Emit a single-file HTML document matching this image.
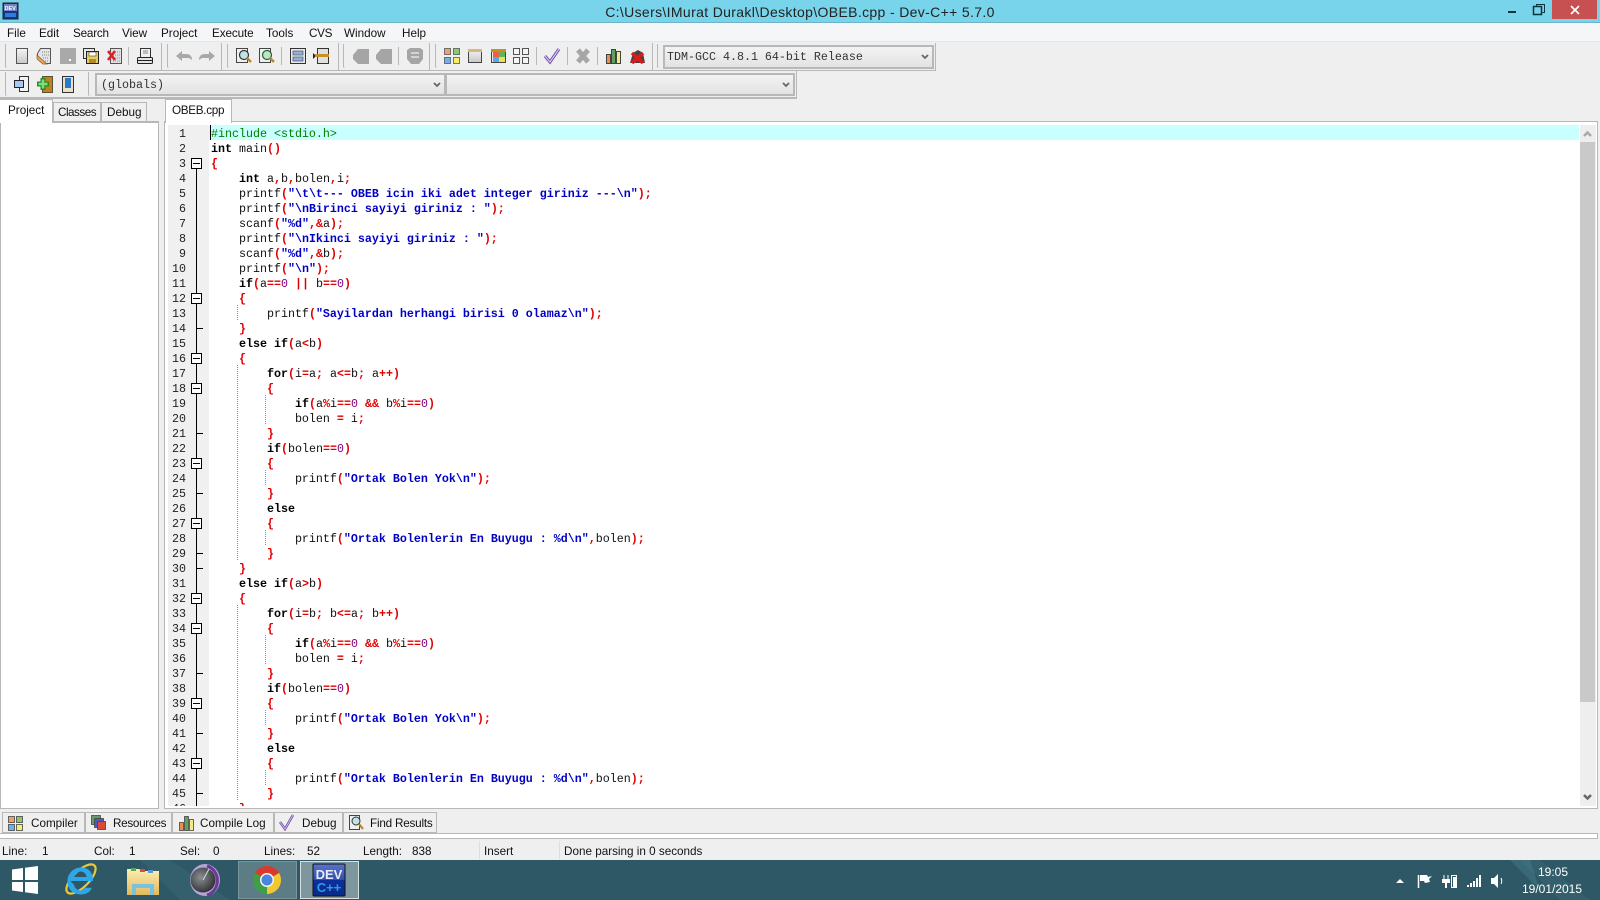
<!DOCTYPE html>
<html><head><meta charset="utf-8"><title>Dev-C++</title>
<style>
html,body{margin:0;padding:0;width:1600px;height:900px;overflow:hidden;background:#efefef}
body{position:relative;font:11.7px "Liberation Sans",sans-serif;color:#111}
.a{position:absolute;white-space:nowrap}
.box{position:absolute;box-sizing:border-box}
pre,pre.a{margin:0;font:11.67px/15px "Liberation Mono",monospace;white-space:pre}
#code b{font-weight:bold}
#code .k{color:#000}
#code .s{color:#0000c4}
#code .y{color:#e00000}
#code .n{color:#800080;font-weight:normal}
#code .p{color:#008000;font-weight:normal}
.sel{position:absolute;box-sizing:border-box;border:2px solid #b8b8b8;background:linear-gradient(#f3f3f3,#e3e3e3);font:11.67px/20px "Liberation Mono",monospace;color:#333;padding-left:2px}
.tab{position:absolute;box-sizing:border-box;border:1px solid #b8b8b8;background:#efefef;line-height:20px;white-space:nowrap;overflow:hidden}
</style></head><body>

<div class="box" style="left:0;top:0;width:1600px;height:23px;background:#78d4ea;border-bottom:1px solid #6fb3c6"></div>
<div class="a" style="left:605px;top:4px;width:390px;text-align:center;font-size:14px;letter-spacing:.35px;color:#222">C:\Users\IMurat Durakl\Desktop\OBEB.cpp - Dev-C++ 5.7.0</div>
<div class="box" style="left:1552px;top:0;width:45px;height:19px;background:#c75050"></div>
<div class="box" style="left:0;top:23px;width:1600px;height:19px;background:#f5f6f7;border-bottom:1px solid #e6e6e6"></div>

<div class="a" style="left:7px;top:27px">File</div>
<div class="a" style="left:39px;top:27px">Edit</div>
<div class="a" style="left:73px;top:27px;letter-spacing:-.2px">Search</div>
<div class="a" style="left:122px;top:27px">View</div>
<div class="a" style="left:161px;top:27px">Project</div>
<div class="a" style="left:212px;top:27px;letter-spacing:-.1px">Execute</div>
<div class="a" style="left:266px;top:27px">Tools</div>
<div class="a" style="left:309px;top:27px;letter-spacing:-.3px">CVS</div>
<div class="a" style="left:344px;top:27px">Window</div>
<div class="a" style="left:402px;top:27px">Help</div>

<!-- toolbar borders -->
<div class="box" style="left:0;top:70px;width:936px;height:1px;background:#b8b8b8"></div>
<div class="box" style="left:935px;top:43px;width:1px;height:28px;background:#b8b8b8"></div>
<div class="box" style="left:0;top:97px;width:797px;height:2px;background:#b8b8b8"></div>
<div class="box" style="left:796px;top:71px;width:1px;height:27px;background:#b8b8b8"></div>

<div class="sel" style="left:663px;top:45px;width:271px;height:24px">TDM-GCC 4.8.1 64-bit Release</div>
<div class="sel" style="left:95px;top:73px;width:351px;height:23px;padding-left:4px;line-height:20px">(globals)</div>
<div class="sel" style="left:445px;top:73px;width:350px;height:23px"></div>

<!-- left tabs -->
<div class="box" style="left:0;top:121px;width:159px;height:688px;background:#fff;border:1px solid #b8b8b8;border-top:0"></div>
<div class="box" style="left:53px;top:121px;width:106px;height:2px;background:#b8b8b8"></div>
<div class="tab" style="left:53px;top:102px;width:48px;height:20px;padding-left:4px;letter-spacing:-.5px">Classes</div>
<div class="tab" style="left:101px;top:102px;width:46px;height:20px;padding-left:5px">Debug</div>
<div class="tab" style="left:0;top:99px;width:53px;height:24px;background:#fff;border-bottom:0;border-left:0;padding-left:8px;line-height:22px">Project</div>

<!-- editor frame -->
<div class="box" style="left:164px;top:121px;width:1434px;height:688px;background:#fff;border:1px solid #b8b8b8"></div>
<div class="tab" style="left:165px;top:99px;width:67px;height:24px;background:#fff;border-bottom:0;padding-left:6px;line-height:22px;letter-spacing:-.3px">OBEB.cpp</div>
<div class="box" style="left:168px;top:125px;width:41px;height:681px;background:#f0f0f0"></div>
<div class="box" style="left:209px;top:125px;width:1370px;height:15px;background:#c8ffff"></div>
<div class="box" style="left:210px;top:125px;width:1px;height:15px;background:#000"></div>
<div class="box" style="left:1580px;top:125px;width:16px;height:681px;background:#eeeeee"></div>
<div class="box" style="left:1580px;top:142px;width:15px;height:560px;background:#c9c9c9"></div>

<pre class="a" style="left:165px;top:127px;width:21px;height:679px;overflow:hidden;text-align:right;color:#222">1
2
3
4
5
6
7
8
9
10
11
12
13
14
15
16
17
18
19
20
21
22
23
24
25
26
27
28
29
30
31
32
33
34
35
36
37
38
39
40
41
42
43
44
45
46</pre>

<pre id="code" class="a" style="left:211px;top:127px;width:1360px;height:679px;overflow:hidden;color:#111"><b class="p">#include &lt;stdio.h&gt;</b>
<b class="k">int</b> main<b class="y">()</b>
<b class="y">{</b>
    <b class="k">int</b> a<b class="y">,</b>b<b class="y">,</b>bolen<b class="y">,</b>i<b class="y">;</b>
    printf<b class="y">(</b><b class="s">"\t\t--- OBEB icin iki adet integer giriniz ---\n"</b><b class="y">);</b>
    printf<b class="y">(</b><b class="s">"\nBirinci sayiyi giriniz : "</b><b class="y">);</b>
    scanf<b class="y">(</b><b class="s">"%d"</b><b class="y">,&amp;</b>a<b class="y">);</b>
    printf<b class="y">(</b><b class="s">"\nIkinci sayiyi giriniz : "</b><b class="y">);</b>
    scanf<b class="y">(</b><b class="s">"%d"</b><b class="y">,&amp;</b>b<b class="y">);</b>
    printf<b class="y">(</b><b class="s">"\n"</b><b class="y">);</b>
    <b class="k">if</b><b class="y">(</b>a<b class="y">==</b><b class="n">0</b> <b class="y">||</b> b<b class="y">==</b><b class="n">0</b><b class="y">)</b>
    <b class="y">{</b>
        printf<b class="y">(</b><b class="s">"Sayilardan herhangi birisi 0 olamaz\n"</b><b class="y">);</b>
    <b class="y">}</b>
    <b class="k">else if</b><b class="y">(</b>a<b class="y">&lt;</b>b<b class="y">)</b>
    <b class="y">{</b>
        <b class="k">for</b><b class="y">(</b>i<b class="y">=</b>a<b class="y">;</b> a<b class="y">&lt;=</b>b<b class="y">;</b> a<b class="y">++)</b>
        <b class="y">{</b>
            <b class="k">if</b><b class="y">(</b>a<b class="y">%</b>i<b class="y">==</b><b class="n">0</b> <b class="y">&amp;&amp;</b> b<b class="y">%</b>i<b class="y">==</b><b class="n">0</b><b class="y">)</b>
            bolen <b class="y">=</b> i<b class="y">;</b>
        <b class="y">}</b>
        <b class="k">if</b><b class="y">(</b>bolen<b class="y">==</b><b class="n">0</b><b class="y">)</b>
        <b class="y">{</b>
            printf<b class="y">(</b><b class="s">"Ortak Bolen Yok\n"</b><b class="y">);</b>
        <b class="y">}</b>
        <b class="k">else</b>
        <b class="y">{</b>
            printf<b class="y">(</b><b class="s">"Ortak Bolenlerin En Buyugu : %d\n"</b><b class="y">,</b>bolen<b class="y">);</b>
        <b class="y">}</b>
    <b class="y">}</b>
    <b class="k">else if</b><b class="y">(</b>a<b class="y">&gt;</b>b<b class="y">)</b>
    <b class="y">{</b>
        <b class="k">for</b><b class="y">(</b>i<b class="y">=</b>b<b class="y">;</b> b<b class="y">&lt;=</b>a<b class="y">;</b> b<b class="y">++)</b>
        <b class="y">{</b>
            <b class="k">if</b><b class="y">(</b>a<b class="y">%</b>i<b class="y">==</b><b class="n">0</b> <b class="y">&amp;&amp;</b> b<b class="y">%</b>i<b class="y">==</b><b class="n">0</b><b class="y">)</b>
            bolen <b class="y">=</b> i<b class="y">;</b>
        <b class="y">}</b>
        <b class="k">if</b><b class="y">(</b>bolen<b class="y">==</b><b class="n">0</b><b class="y">)</b>
        <b class="y">{</b>
            printf<b class="y">(</b><b class="s">"Ortak Bolen Yok\n"</b><b class="y">);</b>
        <b class="y">}</b>
        <b class="k">else</b>
        <b class="y">{</b>
            printf<b class="y">(</b><b class="s">"Ortak Bolenlerin En Buyugu : %d\n"</b><b class="y">,</b>bolen<b class="y">);</b>
        <b class="y">}</b>
    <b class="y">}</b></pre>

<!-- bottom tabs -->
<div class="tab" style="left:2px;top:812px;width:83px;height:21px;padding-left:28px;line-height:21px">Compiler</div>
<div class="tab" style="left:85px;top:812px;width:87px;height:21px;padding-left:27px;line-height:21px;letter-spacing:-.3px">Resources</div>
<div class="tab" style="left:172px;top:812px;width:102px;height:21px;padding-left:27px;line-height:21px">Compile Log</div>
<div class="tab" style="left:274px;top:812px;width:69px;height:21px;padding-left:27px;line-height:21px">Debug</div>
<div class="tab" style="left:343px;top:812px;width:94px;height:21px;padding-left:26px;line-height:21px;letter-spacing:-.2px">Find Results</div>
<div class="box" style="left:0;top:833px;width:1598px;height:6px;background:#fff;border:1px solid #b8b8b8;border-left:0"></div>

<!-- status bar -->
<div class="a" style="left:2px;top:845px">Line:</div><div class="a" style="left:42px;top:845px">1</div>
<div class="a" style="left:94px;top:845px">Col:</div><div class="a" style="left:129px;top:845px">1</div>
<div class="a" style="left:180px;top:845px">Sel:</div><div class="a" style="left:213px;top:845px">0</div>
<div class="a" style="left:264px;top:845px">Lines:</div><div class="a" style="left:307px;top:845px">52</div>
<div class="a" style="left:363px;top:845px">Length:</div><div class="a" style="left:412px;top:845px">838</div>
<div class="a" style="left:484px;top:845px">Insert</div>
<div class="a" style="left:564px;top:845px">Done parsing in 0 seconds</div>
<div class="box" style="left:479px;top:841px;width:1px;height:18px;background:#ddd"></div>
<div class="box" style="left:559px;top:841px;width:1px;height:18px;background:#ddd"></div>

<!-- taskbar -->
<div class="box" style="left:0;top:860px;width:1600px;height:40px;background:#2e5865"></div>

<svg class="a" style="left:0;top:0" width="1600" height="900" viewBox="0 0 1600 900">
<defs>
<linearGradient id="g1" x1="0" x2="0" y1="0" y2="1"><stop offset="0" stop-color="#f4f4f4"/><stop offset="1" stop-color="#c8c8c8"/></linearGradient>
<radialGradient id="dial" cx=".4" cy=".4" r=".7"><stop offset="0" stop-color="#8b8f92"/><stop offset="1" stop-color="#26282c"/></radialGradient>
<linearGradient id="dev" x1="0" x2="0" y1="0" y2="1"><stop offset="0" stop-color="#5a73c8"/><stop offset=".5" stop-color="#2f4fb0"/><stop offset=".5" stop-color="#0c2f9e"/><stop offset="1" stop-color="#0a2a8a"/></linearGradient>
<linearGradient id="folder" x1="0" x2="0" y1="0" y2="1"><stop offset="0" stop-color="#fdeeb0"/><stop offset="1" stop-color="#e2b95c"/></linearGradient>
</defs>

<!-- title icon -->
<rect x="3" y="3" width="15" height="16" fill="#16358c" stroke="#222"/>
<rect x="4" y="4" width="13" height="7" fill="#6f83c6"/>
<text x="4.5" y="10" font-family="Liberation Sans" font-weight="bold" font-size="5.5" fill="#fff">DEV</text>
<rect x="5" y="13" width="11" height="4" fill="#2d7ddc"/>

<!-- window controls -->
<rect x="1508" y="11" width="8" height="2" fill="#0b3442"/>
<g fill="none" stroke="#0b3442" stroke-width="1"><path d="M1536.5 6.5v-2h8v8h-2"/><rect x="1533.5" y="6.5" width="8" height="8" stroke-width="1.5"/></g>
<path d="M1571 6l8 8m0-8l-8 8" stroke="#fff" stroke-width="1.6"/>

<!-- toolbar handles -->
<g stroke="#b8b8b8" fill="none">
<path d="M5.5 44v23h1M167.5 44v23h1M227.5 44v23h1M343.5 44v23h1M435.5 44v23h1M657.5 44v23h1"/>
<path d="M5.5 72v23h1M88.5 72v23h1"/>
<path d="M128.5 47v18M161.5 43v27M221.5 43v27M281.5 47v18M338.5 43v27M398.5 47v18M429.5 43v27M536.5 47v18M567.5 47v18M597.5 47v18M652.5 43v27"/>
</g>

<!-- new -->
<rect x="16.5" y="48.5" width="11" height="15" fill="url(#g1)" stroke="#555"/>
<!-- open -->
<path d="M40.5 48.5h10v15h-5l-8-7v-3z" fill="#e4e4e4" stroke="#555"/>
<path d="M42 52h7M42 55h7M43 58h6M45 61h4" stroke="#888" stroke-dasharray="1 1"/>
<path d="M37 55l10 9h-4l-6-5z" fill="#eaa45c" stroke="#8a5a20" stroke-width=".7"/>
<!-- save gray -->
<rect x="60" y="48" width="16" height="16" fill="#a9a9a9"/><rect x="69" y="59" width="2" height="2" fill="#fff"/>
<!-- save all -->
<rect x="83.5" y="48.5" width="11" height="10" fill="#e8e8e8" stroke="#333"/>
<rect x="86.5" y="51.5" width="12" height="12" fill="#e9cd63" stroke="#222"/>
<rect x="89" y="52" width="7" height="4" fill="#fff" stroke="#444" stroke-width=".6"/><rect x="89" y="59" width="7" height="4" fill="#b48a2a"/>
<!-- close -->
<rect x="110.5" y="48.5" width="11" height="15" fill="#e0e0e0" stroke="#555"/>
<path d="M113 52h7M113 55h7M113 58h7M113 61h7" stroke="#999" stroke-dasharray="1 1"/>
<path d="M108 51l7 9m0-9l-7 9" stroke="#d8232a" stroke-width="2.6"/>
<!-- print -->
<rect x="140.5" y="48.5" width="10" height="9" fill="#efefef" stroke="#333"/>
<path d="M143 51h5M143 53h5" stroke="#888"/>
<rect x="137.5" y="57.5" width="15" height="6" rx="1" fill="#e4e4e4" stroke="#222"/><path d="M138 60.5h14" stroke="#222"/>
<!-- undo redo -->
<path d="M176 56l6-5v3h4c4 0 6 2 6 6l-3-2h-7v3z" fill="#a8a8a8"/>
<path d="M215 56l-6-5v3h-4c-4 0-6 2-6 6l3-2h7v3z" fill="#a8a8a8"/>
<!-- find -->
<g>
<rect x="236.5" y="48.5" width="11" height="14" fill="#f0f0f0" stroke="#444"/>
<circle cx="244" cy="55" r="4.5" fill="#bfe3e8" stroke="#333" stroke-width="1.2"/><path d="M247 58l4 4" stroke="#b8862a" stroke-width="2.4"/>
<rect x="259.5" y="48.5" width="11" height="14" fill="#f0f0f0" stroke="#444"/>
<circle cx="267" cy="55" r="4.5" fill="#b9e8c4" stroke="#2b5a3a" stroke-width="1.2"/><path d="M270 58l4 4" stroke="#b8862a" stroke-width="2.4"/>
</g>
<!-- goto / indent -->
<rect x="290.5" y="48.5" width="15" height="15" fill="#e8e8e8" stroke="#333"/>
<rect x="293" y="51" width="10" height="4" fill="#8fb0d8" stroke="#445"  stroke-width=".6"/><rect x="293" y="57" width="10" height="4" fill="#8fb0d8" stroke="#445" stroke-width=".6"/>
<path d="M313 53l3 3-3 3z" fill="#222"/>
<rect x="317.5" y="48.5" width="11" height="15" fill="#e0e0e0" stroke="#333"/><rect x="315" y="54" width="14" height="3" fill="#c88f28"/>
<!-- gray bookmarks -->
<path d="M353 55l5-6h11v15h-11l-5-5z" fill="#a5a5a5"/>
<path d="M376 55l5-6h11v15h-11l-5-5z" fill="#a5a5a5"/>
<path d="M407 50l3-2h10l3 2v9l-4 5h-8l-4-5z" fill="#a5a5a5"/><path d="M411 53h8M411 57h8" stroke="#efefef" stroke-width="1.2"/>
<!-- tile icons -->
<g stroke="#555" stroke-width=".8">
<rect x="444.5" y="48.5" width="6" height="6" fill="#f0a070"/><rect x="453.5" y="48.5" width="6" height="6" fill="#8cc870"/>
<rect x="444.5" y="57.5" width="6" height="6" fill="#70aef0"/><rect x="453.5" y="57.5" width="6" height="6" fill="#f5ee70"/>
</g>
<rect x="468.5" y="49.5" width="13" height="13" fill="url(#g1)" stroke="#444"/><rect x="468" y="49" width="14" height="3" fill="#d9b67a"/>
<rect x="491.5" y="49.5" width="14" height="13" fill="#eee" stroke="#444"/><rect x="491" y="49" width="15" height="3" fill="#c88f28"/>
<rect x="493" y="52" width="6" height="5" fill="#e8643c"/><rect x="499" y="52" width="6" height="5" fill="#58b858"/><rect x="493" y="57" width="6" height="5" fill="#5aa6e8"/><rect x="499" y="57" width="6" height="5" fill="#f0e050"/>
<g fill="#f4f4f4" stroke="#444" stroke-width=".9">
<rect x="513.5" y="48.5" width="6" height="6"/><rect x="522.5" y="48.5" width="6" height="6"/><rect x="513.5" y="57.5" width="6" height="6"/><rect x="522.5" y="57.5" width="6" height="6"/>
</g>
<path d="M545 56l5 6 9-13" fill="none" stroke="#6a4aa8" stroke-width="3"/><path d="M545 56l5 6 9-13" fill="none" stroke="#d8c8f0" stroke-width="1.2"/>
<path d="M578 50l10 12m0-12l-10 12" stroke="#a6a6a6" stroke-width="5"/>
<g stroke="#333" stroke-width=".9">
<rect x="606.5" y="54.5" width="4" height="9" fill="#e8904c"/><rect x="611.5" y="49.5" width="4" height="14" fill="#60a060"/><rect x="616.5" y="51.5" width="4" height="12" fill="#f0ec88"/>
</g>
<path d="M630 63l3-10 5-3 5 3 2 10z" fill="#444"/>
<path d="M632 53l11 10m0-10l-11 10" stroke="#e01818" stroke-width="3.500"/>

<!-- toolbar2 icons -->
<rect x="19.5" y="76.5" width="9" height="15" fill="#f2f2f2" stroke="#333"/>
<rect x="14.5" y="80.5" width="9" height="7" fill="#a8c8f0" stroke="#223"/>
<rect x="42.5" y="76.5" width="10" height="16" fill="#c67f1e" stroke="#553"/>
<path d="M37 84h12M43 78v12" stroke="#2a8a2a" stroke-width="5"/><path d="M38.5 84h9M43 79.500v9" stroke="#7ae07a" stroke-width="2.500"/>
<rect x="62.5" y="76.500" width="11" height="16" fill="#e8e0c8" stroke="#333"/><rect x="65" y="78" width="6" height="10" fill="#2a78c8"/>

<!-- chevrons -->
<g fill="none" stroke="#666" stroke-width="1.800">
<path d="M922 55l3 3 3-3M434 83l3 3 3-3M783 83l3 3 3-3"/>
<path d="M1584 795l3.500 3.500 3.500-3.500" stroke-width="2.500"/>
<path d="M1584 136l3.500-3.500 3.500 3.500" stroke="#aaa" stroke-width="2.500"/>
</g>

<!-- fold gutter -->
<path d="M196.500 169V806" stroke="#000"/>
<path d="M197 328.500h6M197 433.500h6M197 493.500h6M197 553.500h6M197 568.500h6M197 673.500h6M197 733.500h6M197 793.500h6" stroke="#000"/>
<g fill="#fff" stroke="#000">
<rect x="191.500" y="158.500" width="10" height="10"/><rect x="191.500" y="293.500" width="10" height="10"/><rect x="191.500" y="353.500" width="10" height="10"/><rect x="191.500" y="383.500" width="10" height="10"/><rect x="191.500" y="458.500" width="10" height="10"/><rect x="191.500" y="518.500" width="10" height="10"/><rect x="191.500" y="593.500" width="10" height="10"/><rect x="191.500" y="623.500" width="10" height="10"/><rect x="191.500" y="698.500" width="10" height="10"/><rect x="191.500" y="758.500" width="10" height="10"/>
</g>
<path d="M193 163.500h7M193 298.500h7M193 358.500h7M193 388.500h7M193 463.500h7M193 523.500h7M193 598.500h7M193 628.500h7M193 703.500h7M193 763.500h7" stroke="#000"/>
<!-- indent guides -->
<path d="M237.500 305v15M237.500 365v195M237.500 605v195M265.500 395v30M265.500 470v15M265.500 530v15M265.500 635v30M265.500 710v15M265.500 770v15" stroke="#888" stroke-dasharray="1 1"/>

<!-- bottom tab icons -->
<g stroke="#444" stroke-width=".8">
<rect x="8.500" y="816.500" width="6" height="6" fill="#f0a070"/><rect x="16.500" y="816.500" width="6" height="6" fill="#8cc870"/>
<rect x="8.500" y="824.500" width="6" height="6" fill="#70aef0"/><rect x="16.500" y="824.500" width="6" height="6" fill="#f5ee70"/>
<rect x="91.500" y="815.500" width="9" height="9" fill="#6a9a6a"/><rect x="94.500" y="818.500" width="9" height="9" fill="#4a5ac8"/><rect x="97.500" y="821.500" width="8" height="8" fill="#d84a3a"/>
<rect x="179.500" y="822.500" width="4" height="8" fill="#e8904c"/><rect x="184.500" y="816.500" width="4" height="14" fill="#60a060"/><rect x="189.500" y="819.500" width="4" height="11" fill="#f0ec88"/>
</g>
<path d="M280 822l5 7 8-14" fill="none" stroke="#6a4aa8" stroke-width="2.400"/><path d="M280 822l5 7 8-14" fill="none" stroke="#d8c8f0" stroke-width=".8"/>
<rect x="349.500" y="815.500" width="10" height="14" fill="#f0f0f0" stroke="#444"/>
<circle cx="356" cy="821" r="4" fill="#bfe3e8" stroke="#333"/><path d="M359 824l4 5" stroke="#b8862a" stroke-width="2.200"/>

<!-- taskbar decor -->
<path d="M140 860l40 40h50l-60-40zM1520 860l40 40h30l-50-40z" fill="#3d6f7c" opacity=".35"/>
<path d="M1510 860l30 30-10-30z" fill="#4a8593" opacity=".4"/>
<!-- win logo -->
<path d="M12 869.500l11-1.500v12h-11zM25 867.700l13-1.700v14h-13zM12 882h11v10l-11-1.500zM25 882h13v12l-13-1.700z" fill="#fff"/>
<!-- IE -->
<ellipse cx="81" cy="879" rx="19" ry="8" transform="rotate(-45 81 879)" fill="none" stroke="#eac83a" stroke-width="2.200"/>
<g transform="translate(81 881) scale(1.350) translate(-81 -881)">
<path d="M73 881h17c0-7-4-10-9-10-6 0-10 5-10 10 0 6 4 10 10 10 4 0 7-2 8-5h-5c-1 1-2 2-3 2-3 0-5-2-5-4zM76 878c0-2 3-4 5-4s4 2 4 4z" fill="#2ea6e8" fill-rule="evenodd"/>
</g>
<!-- explorer -->
<path d="M127 869h12l3 2h17v24h-32z" fill="url(#folder)"/>
<rect x="131" y="868" width="5" height="3" fill="#58a858"/><rect x="140" y="869" width="5" height="3" fill="#d05040"/><rect x="148" y="870" width="5" height="3" fill="#5a9ad8"/>
<path d="M132 895v-11h22v11h-4v-7h-14v7z" fill="#7ac0e0"/>
<!-- dial -->
<ellipse cx="205" cy="880" rx="15" ry="16" fill="#b6a4d8"/>
<path d="M207 866a14 15 0 0 1 0 29" fill="none" stroke="#6a3a98" stroke-width="3"/>
<circle cx="203" cy="880" r="12.500" fill="url(#dial)"/>
<path d="M203 880l6-11" stroke="#ddd"/>
<!-- chrome btn -->
<rect x="238.500" y="861.500" width="58" height="37" fill="#5d7d86" stroke="#7a949b"/>
<path d="M267 880L254.900 873A14 14 0 0 1 279.100 873z" fill="#d93a2e"/>
<path d="M267 880L279.100 873A14 14 0 0 1 267 894z" fill="#f2c82e"/>
<path d="M267 880L267 894A14 14 0 0 1 254.900 873z" fill="#3f9e48"/>
<circle cx="267" cy="880" r="7" fill="#f4f4f4"/><circle cx="267" cy="880" r="5.500" fill="#4a86dc"/>
<!-- dev btn -->
<rect x="300.500" y="861.500" width="58" height="37" fill="#7e969d" stroke="#d6e0e2"/>
<rect x="313" y="864" width="32" height="32" rx="1" fill="url(#dev)" stroke="#111"/>
<text x="329" y="879" text-anchor="middle" font-family="Liberation Sans" font-weight="bold" font-size="13" fill="#e8ecf6">DEV</text>
<text x="329" y="892" text-anchor="middle" font-family="Liberation Sans" font-weight="bold" font-size="13" fill="#2f9be8">C++</text>

<!-- tray -->
<path d="M1396 883l4-4 4 4z" fill="#fff"/>
<path d="M1418.500 875v13" stroke="#fff" stroke-width="1.500"/><path d="M1420 875h7l1 2 4-1-3 3 1 3-5 1-1-2h-4z" fill="#fff"/>
<path d="M1444 875v4M1448 875v4" stroke="#fff"/><rect x="1442" y="879" width="8" height="4" fill="#fff"/><rect x="1445" y="883" width="2" height="5" fill="#fff"/>
<rect x="1451.500" y="875.500" width="5" height="12" fill="none" stroke="#fff"/><rect x="1453" y="877" width="3" height="10" fill="#fff"/>
<path d="M1467 885h2v2h-2zM1470 883h2v4h-2zM1473 881h2v6h-2zM1476 878h2v9h-2zM1479 875h2v12h-2z" fill="#fff"/>
<path d="M1491 878h3l4-4v14l-4-4h-3z" fill="#fff"/><path d="M1501 878c1 2 1 4 0 6" fill="none" stroke="#fff"/>
</svg>

<div class="a" style="left:1530px;top:865px;width:46px;text-align:center;color:#fff;font-size:12px">19:05</div>
<div class="a" style="left:1520px;top:882px;width:64px;text-align:center;color:#fff;font-size:12px">19/01/2015</div>
</body></html>
